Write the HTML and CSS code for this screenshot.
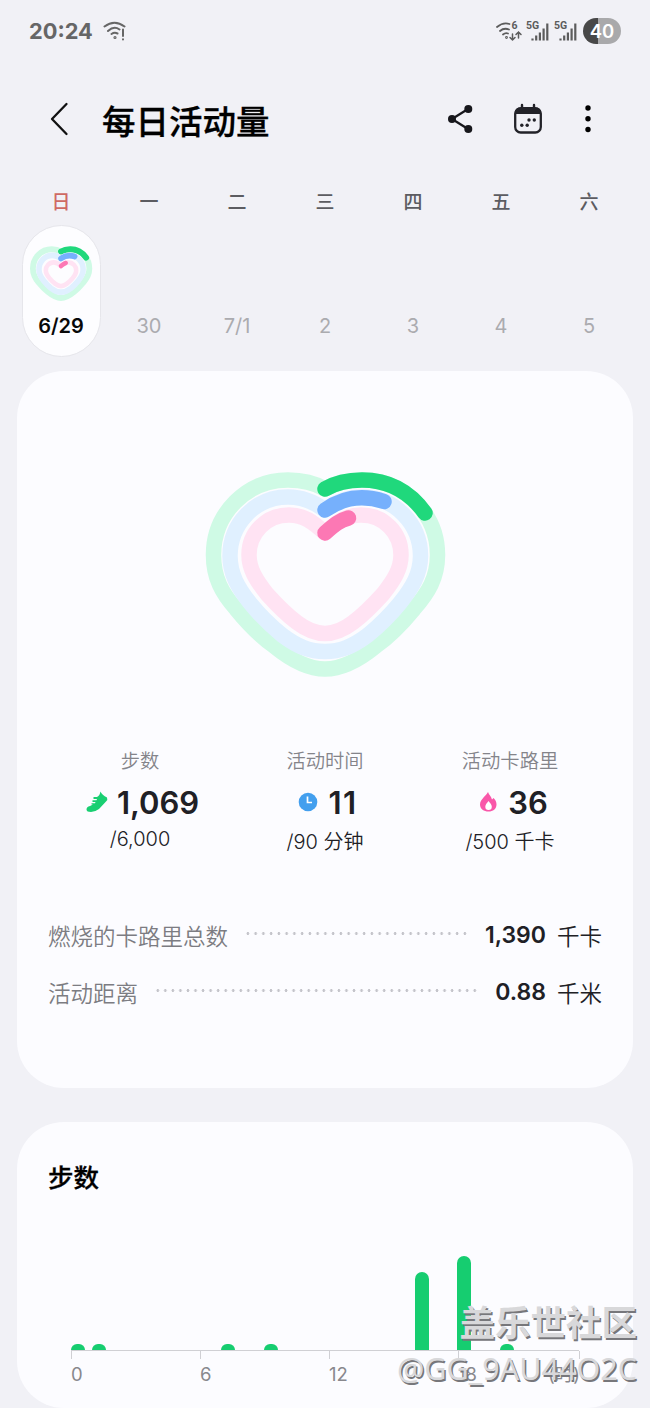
FILE: index.html
```
<!DOCTYPE html>
<html lang="zh-CN">
<head>
<meta charset="utf-8">
<title>每日活动量</title>
<link rel="stylesheet" href="styles.css">
</head>
<body>
<svg class="defs" width="0" height="0" aria-hidden="true">
  <defs>
    <g id="ring-green">
      <path class="track-green" d="M325 489C313 482 302 480 288 480C247 480 213.500 513 213.500 555C213.500 578 222 593 236 609C245 620 260 636 274 646C291 660 307 669 325 669C343 669 359 660 376 646C390 636 405 620 414 609C428 593 437.500 578 437.500 555C437.500 513 403 480 362 480C348 480 337 482 325 489Z"/>
      <path class="arc-green" d="M325 489C337 482 348 480 362 480C389 480 410 492 425 513"/>
    </g>
    <g id="ring-blue">
      <path class="track-blue" d="M325 510C313 501 302 497 288 497C255 497 230 524 230 556C230 574 238 588 250 603C259 614 271 626 282 635C298 647 310 651.500 325 651.500C340 651.500 352 647 368 635C379 626 391 614 400 603C412 588 420.500 574 420.500 556C420.500 524 395 497 362 497C348 497 337 501 325 510Z"/>
      <path class="arc-blue" d="M325 510C342 498 361 494 384 501.500"/>
    </g>
    <g id="ring-pink">
      <path class="track-pink" d="M325 533C313 522 304 515 289 515C266 515 249 533 249 555C249 569 256 580 267 594C276 604 287 615 297 622.500C307 630 315 633.500 325 633.500C335 633.500 343 630 353 622.500C363 615 374 604 383 594C394 580 401 569 401 555C401 533 384 515 361 515C346 515 337 522 325 533Z"/>
      <path class="arc-pink" d="M325 533C333 526 338 521 348.500 518"/>
    </g>
  </defs>
</svg>
<div class="screen">
  <header class="status">
    <span class="time">20:24</span>
    <svg class="wifi" width="24" height="20" viewBox="0 0 24 20" fill="none" stroke="#666" stroke-width="2" stroke-linecap="round">
      <path d="M1.500 5.500Q11.500-2 21.500 5.500M5 10Q11 4.500 16.500 8.500M8.500 13Q11.500 11 14.500 12.500M20 8.500v6.500M20 18.300v.1"/><circle cx="12" cy="16.500" r=".6"/>
    </svg>
    <div class="status-right">
      <svg width="28" height="22" viewBox="0 0 28 22" fill="none" stroke="#5c5c5c" stroke-width="1.800" stroke-linecap="round">
        <path d="M2 7Q8 2 14.500 4M5 11Q9 7.500 14 9.500M8 14.500Q10.500 12.500 13 13.500"/><circle cx="11.500" cy="17.500" r=".5"/>
        <path d="M17.500 14v6m-2.500-2.500 2.500 2.500 2.500-2.500M23.500 18v-6m-2.500 2.500 2.500-2.500 2.500 2.500" stroke-width="1.500"/>
        <text class="net" x="16.500" y="9">6</text>
      </svg>
      <svg width="25" height="22" viewBox="0 0 25 22"><text class="net" x="0" y="9">5G</text><path class="sig" d="M6.500 18.500v2M10.200 15.500v5M13.900 12.500v8M17.600 8.500v12M21.300 3.500v17"/></svg>
      <svg width="25" height="22" viewBox="0 0 25 22"><text class="net" x="0" y="9">5G</text><path class="sig" d="M6.500 18.500v2M10.200 15.500v5M13.900 12.500v8M17.600 8.500v12M21.300 3.500v17"/></svg>
      <span class="battery">40</span>
    </div>
  </header>

  <nav class="bar">
    <svg width="20" height="34" viewBox="0 0 20 34"><path d="M17.500 2 3 17l14.500 15" fill="none" stroke="#111" stroke-width="2.300" stroke-linecap="round" stroke-linejoin="round"/></svg>
    <h1>每日活动量</h1>
    <svg class="share" width="28" height="30" viewBox="0 0 28 30"><path d="M21 5 5 15l16 10" fill="none" stroke="#17171c" stroke-width="2.300"/><circle cx="21.300" cy="5" r="4" fill="#17171c"/><circle cx="5" cy="15" r="4" fill="#17171c"/><circle cx="21.300" cy="25" r="4" fill="#17171c"/></svg>
    <svg class="cal" width="30" height="32" viewBox="0 0 30 32"><path d="M9 2v5M21 2v5" stroke="#222228" stroke-width="2.400" stroke-linecap="round"/><rect x="2.200" y="5.500" width="25.600" height="24" rx="5.500" fill="none" stroke="#222228" stroke-width="2.300"/><path d="M1.500 11q0-7 7-7h13q7 0 7 7z" fill="#222228"/><g fill="#222228"><circle cx="16" cy="17" r="1.700"/><circle cx="21.300" cy="17" r="1.700"/><circle cx="8.800" cy="22.300" r="1.700"/><circle cx="14.200" cy="22.300" r="1.700"/></g></svg>
    <svg class="more" width="8" height="30" viewBox="0 0 8 30"><circle cx="4" cy="4" r="2.700"/><circle cx="4" cy="14.800" r="2.700"/><circle cx="4" cy="25.500" r="2.700"/></svg>
  </nav>

  <section class="week">
    <div class="day sunday"><span class="name">日</span><div class="pill">
      <svg class="mini" width="64" height="56" viewBox="0 0 64 56">
        <use href="#ring-green" stroke-width="23" transform="translate(32 6.500) scale(.252 .258) translate(-325 -489)"/>
        <use href="#ring-blue" stroke-width="24" transform="translate(32 13.500) scale(.232 .238) translate(-325 -510)"/>
        <use href="#ring-pink" stroke-width="23" transform="translate(32 21) scale(.2) translate(-325 -533)"/>
      </svg>
      <span class="date">6/29</span></div></div>
    <div class="day"><span class="name">一</span><span class="date">30</span></div>
    <div class="day"><span class="name">二</span><span class="date">7/1</span></div>
    <div class="day"><span class="name">三</span><span class="date">2</span></div>
    <div class="day"><span class="name">四</span><span class="date">3</span></div>
    <div class="day"><span class="name">五</span><span class="date">4</span></div>
    <div class="day"><span class="name">六</span><span class="date">5</span></div>
  </section>

  <section class="card summary">
    <svg class="rings" width="244" height="212" viewBox="203 469 244 212" stroke-width="15.500"><use href="#ring-green"/><use href="#ring-blue"/><use href="#ring-pink"/></svg>
    <div class="stats">
      <div class="stat">
        <span class="label">步数</span>
        <div class="value"><svg width="22" height="22" viewBox="0 0 22 22"><path d="M14.500 .5Q16 4 21 6.500Q22 8.500 20 10.500L13 18Q9 21 5 21Q.5 21 .5 18.500Q.5 15.500 4 15L7 13.500H5.500V12.300H9L9.500 11H6.500V9.300H10.500L11 8H7.500V6H11Q13.500 5 14.500 .5Z" fill="#19cf72"/></svg><b>1,069</b></div>
        <span class="goal latin">/6,000</span>
      </div>
      <div class="stat">
        <span class="label">活动时间</span>
        <div class="value"><svg width="22" height="22" viewBox="0 0 22 22"><circle cx="11" cy="11" r="9.300" fill="#439fee"/><path d="M10.500 5.500V11.500H15" fill="none" stroke="#fff" stroke-width="1.700"/></svg><b class="wide">11</b></div>
        <span class="goal">/90 分钟</span>
      </div>
      <div class="stat">
        <span class="label">活动卡路里</span>
        <div class="value"><svg width="22" height="22" viewBox="0 0 22 22"><path d="M11 1C12 4 14 5 15 8.500L16.500 7C18.500 9 19.500 11 19.500 13.500C19.500 18 16 20.500 11.500 20.500S3 18 3 13.500C3 10 5 8.500 6.500 6.500C9 4 10 3 11 1Z" fill="#f957a9"/><path d="M11.500 10C13 12 14.800 13.500 14.800 15.800A3.200 3.200 0 0 1 8.300 15.800C8.300 13.500 10 12 11.500 10Z" fill="#fff"/></svg><b>36</b></div>
        <span class="goal">/500 千卡</span>
      </div>
    </div>
    <div class="rows">
      <div class="row"><span class="key">燃烧的卡路里总数</span><i class="dots"></i><b>1,390</b><span>千卡</span></div>
      <div class="row"><span class="key">活动距离</span><i class="dots"></i><b>0.88</b><span>千米</span></div>
    </div>
  </section>

  <section class="card steps">
    <h2>步数</h2>
    <div class="chart">
      <i style="height:6px"></i><i style="height:6px"></i><i></i><i></i><i></i><i></i><i></i><i style="height:6px"></i><i></i><i style="height:6px"></i><i></i><i></i><i></i><i></i><i></i><i></i><i style="height:78px"></i><i></i><i style="height:94px"></i><i></i><i style="height:6px"></i><i></i><i></i><i></i>
    </div>
    <div class="axis"><span>0</span><span>6</span><span>12</span><span>18</span><span class="last">(时)</span></div>
  </section>

  <div class="mark"><span class="mark-name">盖乐世社区</span><span class="mark-user">@GG_9AU44O2C</span></div>
</div>
</body>
</html>
```
FILE: styles.css
```
* { box-sizing: border-box; }
body { margin: 0; background: #f1f1f6; font-family: Inter, "Noto Sans CJK SC", sans-serif; color: #202025; }
svg { display: block; flex: none; }
.defs { position: absolute; }
.screen { position: relative; width: 650px; height: 1408px; overflow: hidden; }
.net { font: 700 10.500px Roboto, sans-serif; fill: #5c5c5c; stroke: none; }
.sig { fill: none; stroke: #5c5c5c; stroke-width: 2.200px; }

.status { display: flex; align-items: center; height: 62px; padding: 0 29px; }
.time { font-size: 21.800px; font-weight: 700; color: #666; width: 64px; white-space: nowrap; }
.wifi { margin-left: 10px; }
.status-right { display: flex; align-items: center; gap: 3px; margin-left: auto; }
.battery { width: 38px; height: 26px; margin-left: 1px; border-radius: 13px; background: linear-gradient(90deg, #484848 40%, #a9a9ab 40%); color: #fff; font-size: 18.500px; font-weight: 600; line-height: 27px; text-align: center; }

.bar { display: flex; align-items: center; height: 114px; padding: 0 58px 0 49px; }
.bar h1 { margin: 6px 0 0 33px; font-size: 33.500px; font-weight: 500; line-height: 40px; color: #000; -webkit-text-stroke: .3px #000; }
.share { margin-left: auto; }
.cal { margin-left: 38px; }
.more { margin-left: 41px; }

.week { display: grid; grid-template-columns: repeat(7, 88px); padding: 0 17px; height: 195px; }
.day { display: flex; flex-direction: column; align-items: center; padding-top: 16px; }
.name { font-size: 19px; line-height: 22px; font-weight: 500; color: #5c5c61; }
.sunday .name { color: #cf6a64; }
.date { margin-top: 99px; font-size: 20px; line-height: 26px; font-weight: 380; color: #ababaf; }
.pill { display: flex; flex-direction: column; align-items: center; width: 79px; height: 132px; margin-top: 11px; padding-top: 19px; border: 1px solid #e6e6eb; border-radius: 40px; background: #fdfdff; }
.pill .date { margin-top: 12px; font-weight: 600; color: #080808; }

.track-green, .track-blue, .track-pink, .arc-green, .arc-blue, .arc-pink { fill: none; stroke-linecap: round; stroke-linejoin: round; }
.track-green { stroke: #cffae5; }
.track-blue { stroke: #e0f0ff; }
.track-pink { stroke: #ffe3f3; }
.arc-green { stroke: #20d87c; }
.arc-blue { stroke: #76b0fc; }
.arc-pink { stroke: #fc78b4; }

.card { margin: 0 17px; border-radius: 47px; background: #fcfcff; }
.summary { height: 717px; padding-top: 98px; }
.rings { margin: 0 auto; }
.stats { display: grid; grid-template-columns: repeat(3, 185px); justify-content: center; margin-top: 67px; }
.stat { display: flex; flex-direction: column; align-items: center; }
.label { font-size: 19.300px; line-height: 26px; font-weight: 350; color: #84848a; }
.value { display: flex; align-items: center; gap: 9px; height: 40px; margin-top: 8px; padding-left: 5px; }
.value b { font-size: 31px; font-weight: 600; }
.value .wide { letter-spacing: 1.500px; }
.goal { margin-top: 7px; font-size: 20px; line-height: 26px; font-weight: 350; }
.goal.latin { margin-top: 4px; }
.rows { padding: 0 31px; margin-top: 51px; }
.row { display: flex; align-items: center; height: 57px; font-size: 22.500px; font-weight: 350; }
.key { color: #7c7c82; }
.dots { flex: 1; height: 3px; margin: 0 16px 2px; background: radial-gradient(circle, #c4c4ca 1.200px, transparent 1.600px) 0 0 / 7.650px 3px round; }
.row b { margin-right: 11px; font-size: 23px; font-weight: 600; }

.steps { height: 286px; margin-top: 34px; padding: 38px 54px 0; }
.steps h2 { margin: 0 0 0 -23px; font-size: 25.500px; line-height: 36px; font-weight: 500; color: #000; -webkit-text-stroke: .3px #000; }
.chart { display: flex; justify-content: space-between; align-items: flex-end; width: 508px; height: 155px; border-bottom: 1px solid #d0d0d4; }
.chart i { width: 14px; border-radius: 7px 7px 0 0; background: #16cd70; }
.axis { display: grid; grid-template-columns: 129px 129px 129px 121px; grid-auto-flow: column; width: 508px; color: #88888d; font-size: 18.500px; font-weight: 380; }
.axis span { height: 36px; padding-top: 11px; line-height: 24px; background: linear-gradient(#d0d0d4, #d0d0d4) 0 0 / 1px 8px no-repeat; }
.axis .last { width: 1px; display: flex; justify-content: flex-end; white-space: nowrap; }

.mark { position: absolute; right: 13px; top: 1298px; display: flex; flex-direction: column; align-items: flex-end; white-space: nowrap; color: #d8d8da; text-shadow: 1.500px 1.500px 0 #77777b; }
.mark-name { font: 700 35.500px/46px "Noto Sans CJK SC", sans-serif; }
.mark-user { font: 400 30.500px/48px "Noto Sans", sans-serif; }
```
